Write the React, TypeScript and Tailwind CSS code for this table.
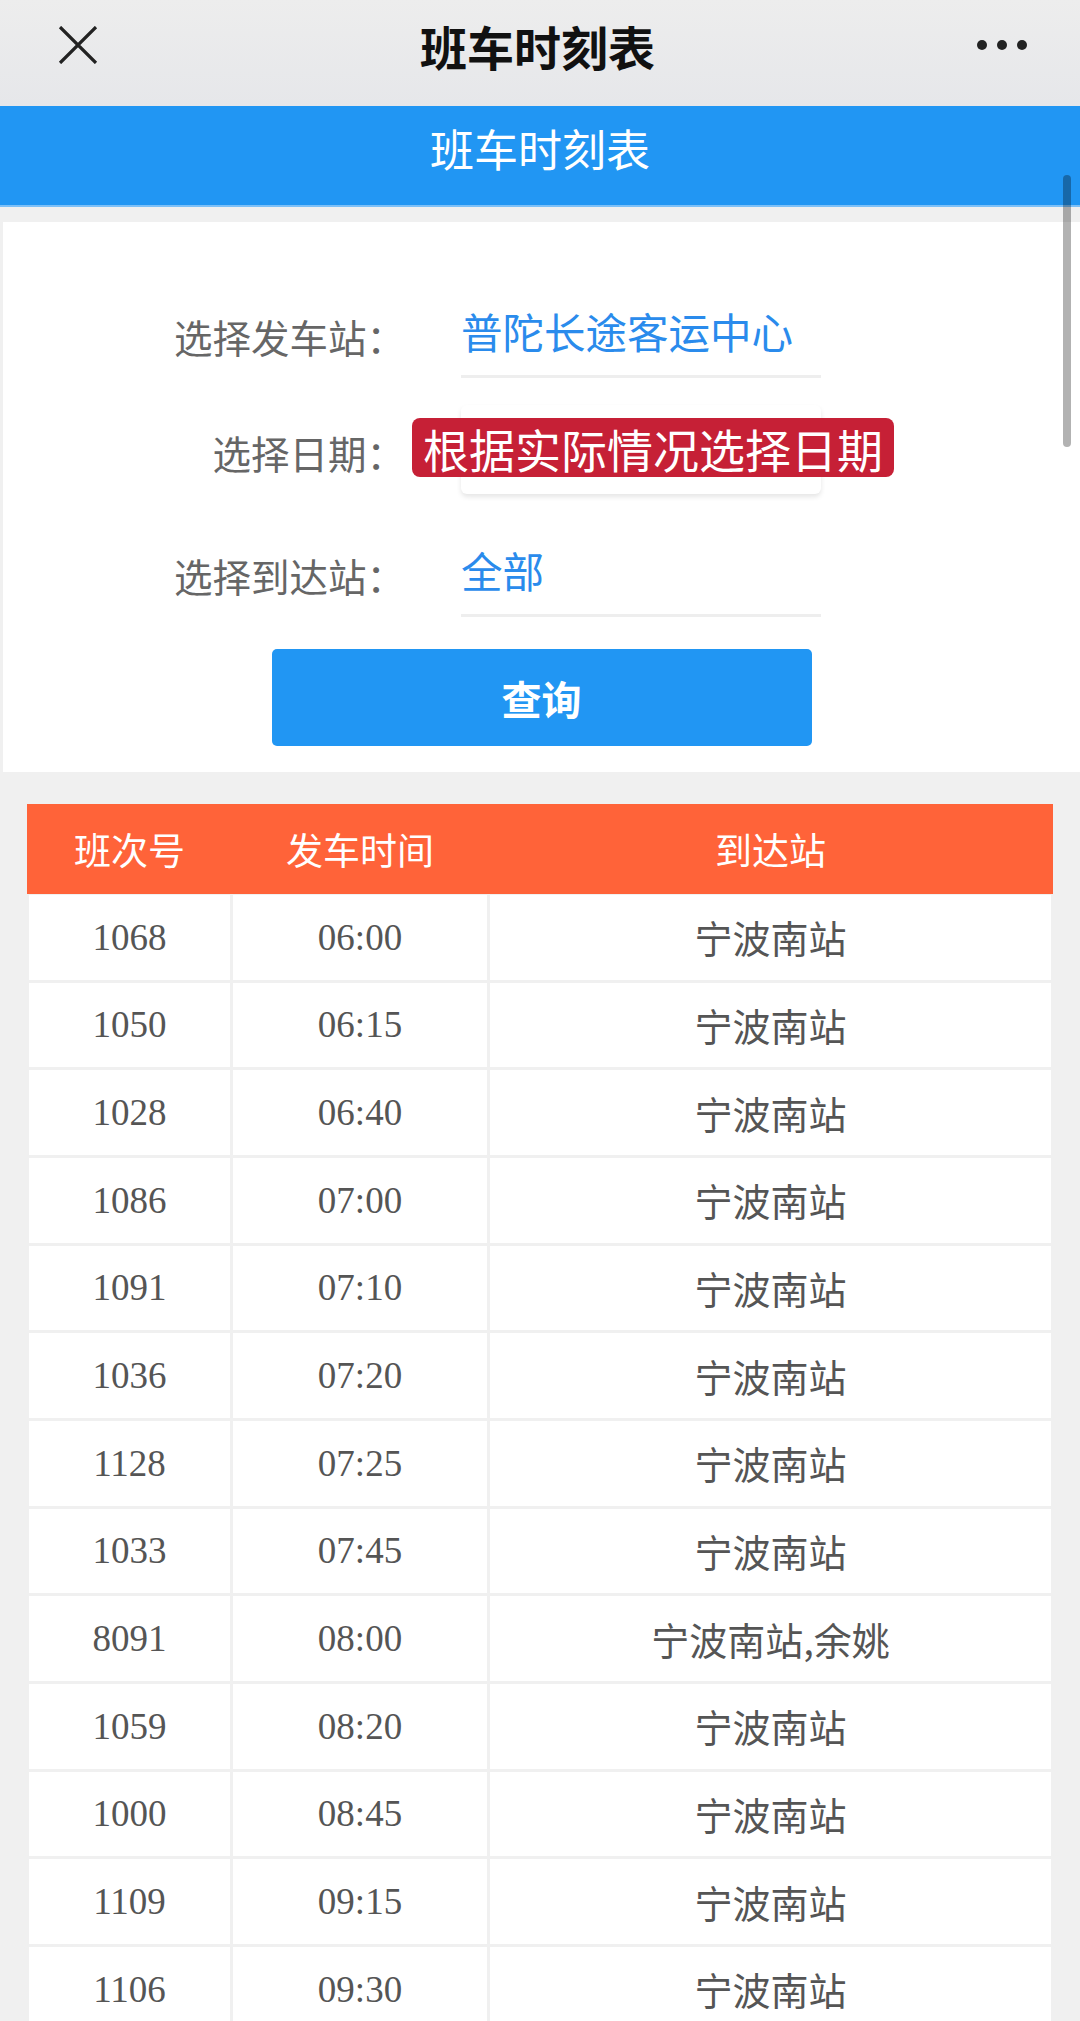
const rows: [string, string, string][] = [
  ["1068", "06:00", "宁波南站"],
  ["1050", "06:15", "宁波南站"],
  ["1028", "06:40", "宁波南站"],
  ["1086", "07:00", "宁波南站"],
  ["1091", "07:10", "宁波南站"],
  ["1036", "07:20", "宁波南站"],
  ["1128", "07:25", "宁波南站"],
  ["1033", "07:45", "宁波南站"],
  ["8091", "08:00", "宁波南站,余姚"],
  ["1059", "08:20", "宁波南站"],
  ["1000", "08:45", "宁波南站"],
  ["1109", "09:15", "宁波南站"],
  ["1106", "09:30", "宁波南站"],
];

const cjk = "font-['Noto_Sans_CJK_SC',_'Noto_Sans',_sans-serif]";
const serif = "font-['Liberation_Serif',_'Noto_Sans_CJK_SC',_serif]";

function TopBar() {
  return (
    <div className="h-[106px] bg-gradient-to-b from-[#ededed] to-[#e6e7ea] flex items-center pb-[16px]">
      <div className="ml-[58px] w-[40px] h-[38px]">
        <svg width="40" height="38" viewBox="0 0 40 38" fill="none">
          <path d="M2 1L38 37M38 1L2 37" stroke="#222" strokeWidth="3.2" />
        </svg>
      </div>
      <div className={`flex-1 text-center text-[47px] font-bold text-[#111] leading-none ${cjk}`}>
        班车时刻表
      </div>
      <div className="mr-[53px] w-[50px] flex items-center justify-between">
        <span className="w-[10px] h-[10px] rounded-full bg-[#222]" />
        <span className="w-[10px] h-[10px] rounded-full bg-[#222]" />
        <span className="w-[10px] h-[10px] rounded-full bg-[#222]" />
      </div>
    </div>
  );
}

function FormRow({ label, children }: { label: string; children: React.ReactNode }) {
  return (
    <div className="flex items-center">
      <div className={`w-[402px] text-right text-[38.5px] leading-none text-[#666] pt-[6px] ${cjk}`}>{label}</div>
      <div className="ml-[56px] w-[360px]">{children}</div>
    </div>
  );
}

export default function App() {
  return (
    <div className="relative w-[1080px] h-[2021px] overflow-hidden bg-[#f0f0f0]">
      <TopBar />

      {/* page title */}
      <div className="h-[101px] bg-[#2196f3] border-b-2 border-[#7cc0f8] flex items-center justify-center pb-[16px]">
        <span className={`text-white text-[44px] leading-none ${cjk}`}>班车时刻表</span>
      </div>

      {/* search form */}
      <div className="mt-[15px] ml-[3px] bg-white pt-[67px] pb-[26px]">
        <FormRow label="选择发车站：">
          <div className={`h-[89px] flex items-center border-b-[3px] border-[#eeeeee] text-[41.5px] leading-none text-[#2a8bec] ${cjk}`}>
            普陀长途客运中心
          </div>
        </FormRow>
        <div className="mt-[27px]">
          <FormRow label="选择日期：">
            <div className="relative h-[89px] rounded-[6px] bg-white shadow-[0_3px_5px_rgba(0,0,0,0.10)]">
              <div
                className={`absolute left-[-49px] top-[13px] w-[482px] h-[59px] rounded-[8px] bg-[#c62036] flex items-center justify-center text-white text-[46px] leading-none ${cjk}`}
              >
                根据实际情况选择日期
              </div>
            </div>
          </FormRow>
        </div>
        <div className="mt-[34px]">
          <FormRow label="选择到达站：">
            <div className={`h-[89px] flex items-center border-b-[3px] border-[#eeeeee] text-[41.5px] leading-none text-[#2a8bec] ${cjk}`}>
              全部
            </div>
          </FormRow>
        </div>
        <button
          className={`mt-[32px] mx-auto block w-[540px] h-[97px] rounded-[5px] bg-[#2196f3] text-white text-[40px] font-bold leading-none ${cjk}`}
        >
          查询
        </button>
      </div>

      {/* timetable */}
      <div className="mt-[32px] mx-[27px]">
        <div className={`h-[90px] bg-[#ff6339] px-[2px] grid grid-cols-[201px_254px_561px] gap-x-[3px] items-center text-white text-[37px] leading-none ${cjk}`}>
          <div className="text-center">班次号</div>
          <div className="text-center">发车时间</div>
          <div className="text-center">到达站</div>
        </div>
        <div className="pt-[1px] px-[2px] flex flex-col gap-y-[3px]">
          {rows.map(([no, time, dest]) => (
            <div key={no} className="h-[84.67px] grid grid-cols-[201px_254px_561px] gap-x-[3px]">
              <div className={`bg-white flex items-center justify-center text-[37px] leading-none text-[#555] ${serif}`}>{no}</div>
              <div className={`bg-white flex items-center justify-center text-[37px] leading-none text-[#555] ${serif}`}>{time}</div>
              <div className={`bg-white flex items-center justify-center text-[38px] leading-none text-[#555] ${cjk}`}>{dest}</div>
            </div>
          ))}
        </div>
      </div>

      {/* scrollbar */}
      <div className="absolute left-[1063px] top-[175px] w-[8px] h-[272px] rounded-full bg-black/30" />
    </div>
  );
}
